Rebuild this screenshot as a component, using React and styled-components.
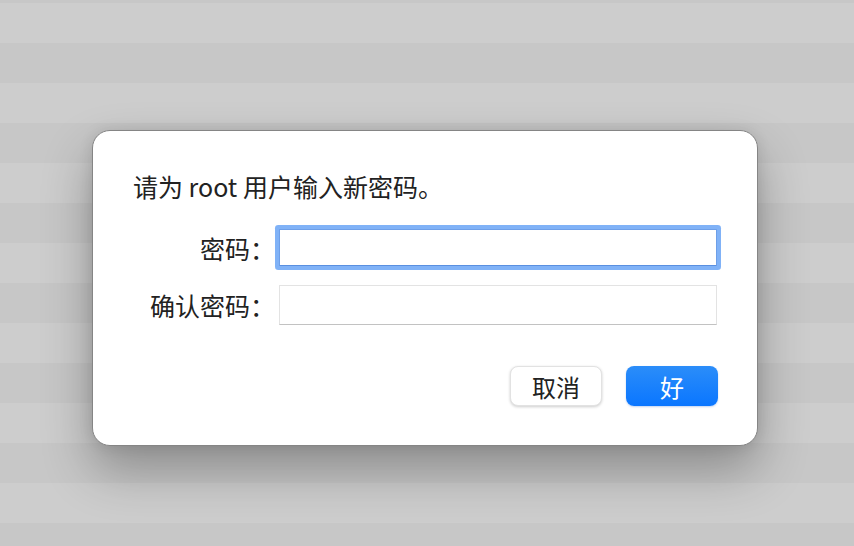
import React from "react";
import styled, { createGlobalStyle } from "styled-components";

const Global = createGlobalStyle`
  html, body {
    margin: 0;
    padding: 0;
  }
  body {
    font-family: "Noto Sans CJK SC", "Noto Sans", sans-serif;
    color: #222222;
  }
`;

const Backdrop = styled.div`
  box-sizing: border-box;
  width: 854px;
  height: 546px;
  overflow: hidden;
  padding: 130px 0 0 92px;
  background: repeating-linear-gradient(
    to bottom,
    #cdcdcd 0 40px,
    #c7c7c7 40px 80px
  );
  background-position: 0 3px;
`;

const Dialog = styled.div`
  box-sizing: border-box;
  width: 666px;
  height: 316px;
  display: flex;
  flex-direction: column;
  padding: 40px 39px 39px 40px;
  background: #ffffff;
  border: 1px solid #858585;
  border-radius: 18px;
  box-shadow: 0 24px 50px rgba(0, 0, 0, 0.3), 0 0 14px rgba(0, 0, 0, 0.1);
`;

const Title = styled.div`
  font-size: 25px;
  line-height: 30px;
  margin-bottom: 28px;
`;

const Form = styled.div`
  display: grid;
  grid-template-columns: 146px 438px;
  row-gap: 19px;
  align-items: center;
`;

const Label = styled.label`
  font-size: 25px;
  line-height: 30px;
  padding-right: 4px;
  text-align: right;
  white-space: nowrap;
`;

const Field = styled.div`
  box-sizing: border-box;
  height: ${(p) => (p.$focused ? 37 : 40)}px;
  background: #ffffff;
  border: 1px solid ${(p) => (p.$focused ? "#6e9fe8" : "#e3e3e3")};
  border-bottom-color: ${(p) => (p.$focused ? "#5a8fe0" : "#c2c2c2")};
  box-shadow: ${(p) => (p.$focused ? "0 0 0 4px #80b2f7" : "none")};
  border-radius: ${(p) => (p.$focused ? "1px" : "0")};
`;

const Actions = styled.div`
  margin-top: auto;
  display: flex;
  justify-content: flex-end;
  gap: 24px;
`;

const Button = styled.button`
  width: 92px;
  height: 40px;
  border-radius: 8px;
  font-family: inherit;
  font-size: 24px;
  padding: 0;
  border: ${(p) => (p.$primary ? "none" : "1px solid #e2e2e2")};
  color: ${(p) => (p.$primary ? "#ffffff" : "#222222")};
  background: ${(p) =>
    p.$primary ? "linear-gradient(to bottom, #2b8df9, #0a76ff)" : "#ffffff"};
  box-shadow: ${(p) =>
    p.$primary
      ? "0 1px 2px rgba(0, 80, 200, 0.25)"
      : "0 1px 3px rgba(0, 0, 0, 0.2)"};
`;

export default function App() {
  return (
    <>
      <Global />
      <Backdrop>
        <Dialog>
          <Title>请为 root 用户输入新密码。</Title>
          <Form>
            <Label>密码：</Label>
            <Field $focused />
            <Label>确认密码：</Label>
            <Field />
          </Form>
          <Actions>
            <Button>取消</Button>
            <Button $primary>好</Button>
          </Actions>
        </Dialog>
      </Backdrop>
    </>
  );
}
